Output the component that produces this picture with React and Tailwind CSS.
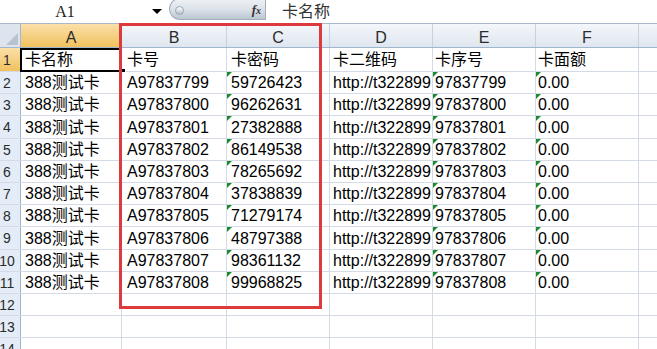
import React from 'react';

const cols = [
    { key: 'A', w: 'w-[101px]', pad: 'pl-[4px]' },
    { key: 'B', w: 'w-[105px]', pad: 'pl-[5px]' },
    { key: 'C', w: 'w-[103px]', pad: 'pl-[4px]' },
    { key: 'D', w: 'w-[103px]', pad: 'pl-[3px]' },
    { key: 'E', w: 'w-[103px]', pad: 'pl-[2px]' },
    { key: 'F', w: 'w-[103px]', pad: 'pl-[2px]' },
];

const heights = ['h-[24px]', 'h-[22px]', 'h-[22px]', 'h-[23px]', 'h-[22px]', 'h-[22px]', 'h-[22px]', 'h-[22px]', 'h-[23px]', 'h-[22px]', 'h-[22px]', 'h-[22px]', 'h-[22px]', 'h-[22px]'];

const pwd = ['59726423', '96262631', '27382888', '86149538', '78265692', '37838839', '71279174', '48797388', '98361132', '99968825'];

const rows = [
    ['卡名称', '卡号', '卡密码', '卡二维码', '卡序号', '卡面额'],
    ...pwd.map((p, i) => ['388测试卡', `A${97837799 + i}`, p, 'http://t322899', `${97837799 + i}`, '0.00']),
];

const font = { fontFamily: '"Liberation Sans", "Noto Sans CJK SC", sans-serif' };

const Flag = () => (
    <span className="absolute left-0 top-0 w-0 h-0 border-t-[5px] border-r-[5px] border-t-[#1e8a2e] border-r-transparent" />
);

const Cell = ({ col, text, flag }) => (
    <div className={`${col.w} shrink-0 h-full relative border-r border-[#d4dbe7] flex items-center pt-[1px] ${col.pad} overflow-hidden whitespace-nowrap text-[16px] text-black`}>
        {flag && <Flag />}
        {text}
    </div>
);

export default function App() {
    return (
        <div className="w-[657px] h-[349px] overflow-hidden bg-white relative" style={font}>
            {/* formula bar */}
            <div className="h-[24px] flex items-center border-b border-[#a9b8c9] bg-white">
                <div className="w-[130px] text-center text-[16px] text-[#222]" style={{ fontFamily: '"Liberation Serif", serif' }}>A1</div>
                <div className="ml-[22px] w-0 h-0 border-l-[5px] border-r-[5px] border-t-[5px] border-l-transparent border-r-transparent border-t-black" />
                <div className="ml-[7px] w-[97px] h-[22px] -mt-[2px] self-start rounded-l-full rounded-br-[3px] bg-gradient-to-b from-[#eef2f6] via-[#dde3ea] to-[#bcc6d1] border border-[#a3afbd] flex items-center justify-between pl-[5px] pr-[4px] pt-[2px]">
                    <div className="w-[9px] h-[9px] rounded-full bg-gradient-to-b from-[#ffffff] to-[#b9c2cc] border border-[#9aa6b4]" />
                    <span className="text-[13px] italic font-bold text-[#333]" style={{ fontFamily: '"Liberation Serif", serif' }}>f<span className="text-[10px]">x</span></span>
                </div>
                <div className="ml-[16px] text-[16px] text-[#333]">卡名称</div>
            </div>

            {/* column headers */}
            <div className="h-[24px] flex border-b border-[#9eb6ce] bg-gradient-to-b from-[#f4f7fb] to-[#dfe6ef]">
                <div className="w-[21px] shrink-0 h-full relative border-r border-[#9eb6ce] bg-[#dde4ee]">
                    <span className="absolute right-[2px] bottom-[2px] w-0 h-0 border-b-[12px] border-l-[12px] border-b-[#b7c3d1] border-l-transparent" />
                </div>
                {cols.map((c, i) => (
                    <div key={c.key} className={`${c.w} shrink-0 h-full flex items-center justify-center pt-[4px] text-[16px] text-[#2b2b2b] border-r ${i === 0 ? 'bg-gradient-to-b from-[#fbe0a8] to-[#f1c15c] border-[#e2b358]' : 'border-[#c5d2e0]'}`}>
                        {c.key}
                    </div>
                ))}
                <div className="flex-1" />
            </div>

            {/* grid rows */}
            {heights.map((h, r) => (
                <div key={r} className={`${h} flex border-b border-[#d4dbe7]`}>
                    <div className={`w-[21px] shrink-0 h-full border-r border-[#9eb6ce] flex items-center ${r === 0 ? 'bg-gradient-to-b from-[#fbe0a8] to-[#f1c15c]' : 'bg-[#e4ecf7]'}`}>
                        <span className="w-[14px] flex justify-center text-[14px] text-[#2b2b2b] pt-[1px]">{r + 1}</span>
                    </div>
                    {cols.map((c, ci) => (
                        <Cell key={c.key} col={c} text={rows[r] ? rows[r][ci] : ''} flag={r > 0 && rows[r] && (ci === 2 || ci === 4 || ci === 5)} />
                    ))}
                    <div className="flex-1" />
                </div>
            ))}

            {/* A1 selection */}
            <div className="absolute left-[20px] top-[48px] w-[102px] h-[24px] border-2 border-black" />
            <div className="absolute left-[121px] top-[68px] w-[5px] h-[5px] bg-black border border-white" />

            {/* red highlight box */}
            <div className="absolute left-[119px] top-[23px] w-[203px] h-[286px] border-[3px] border-[#dd3a3e]" />
        </div>
    );
}
